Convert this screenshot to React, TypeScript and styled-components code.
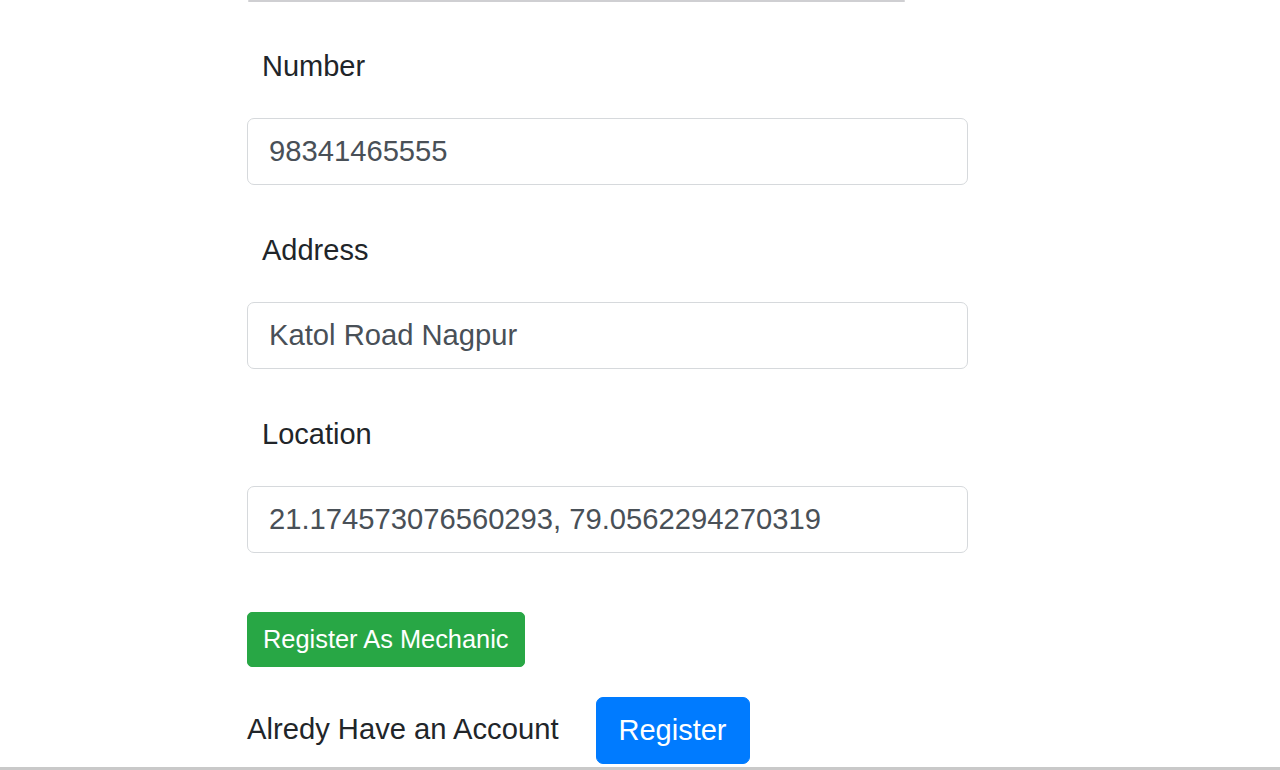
import React, { useState } from 'react';
import styled, { createGlobalStyle } from 'styled-components';

const GlobalStyle = createGlobalStyle`
  html, body {
    margin: 0;
    padding: 0;
    background: #fff;
  }
  body {
    font-family: "Liberation Sans", Arial, sans-serif;
    color: #212529;
  }
`;

const Page = styled.div`
  height: 770px;
  display: flex;
  flex-direction: column;
  overflow: hidden;
`;

const Content = styled.div`
  flex: 1;
  padding-left: 247px;
`;

const TopRule = styled.div`
  width: 657px;
  height: 2px;
  margin-left: 1px;
  background: #cfcfd2;
  border-radius: 1px;
`;

const Form = styled.form`
  width: 721px;
  display: flex;
  flex-direction: column;
  gap: 43px;
  padding-top: 42px;
`;

const Field = styled.div`
  display: flex;
  flex-direction: column;
  gap: 30px;
`;

const Label = styled.label`
  display: block;
  height: 44px;
  line-height: 44px;
  padding-left: 15px;
  font-size: 29px;
  color: #212529;
`;

const Input = styled.input`
  box-sizing: border-box;
  height: 67px;
  width: 100%;
  padding: 0 21px;
  border: 1px solid #d6d9dc;
  border-radius: 7px;
  font-family: "Liberation Sans", Arial, sans-serif;
  font-size: 29.2px;
  color: #495057;
  background: #fff;
  outline: none;
`;

const Actions = styled.div`
  display: flex;
  flex-direction: column;
  align-items: flex-start;
  gap: 30px;
  margin-top: 16px;
`;

const Button = styled.button<{ $variant: 'success' | 'primary'; $size: 'sm' | 'lg' }>`
  box-sizing: border-box;
  border: 1px solid ${(p) => (p.$variant === 'success' ? '#28a745' : '#007bff')};
  background: ${(p) => (p.$variant === 'success' ? '#28a745' : '#007bff')};
  color: #fff;
  font-family: "Liberation Sans", Arial, sans-serif;
  font-size: ${(p) => (p.$size === 'sm' ? '25.4px' : '29px')};
  height: ${(p) => (p.$size === 'sm' ? '55px' : '67px')};
  padding: ${(p) => (p.$size === 'sm' ? '0 15px' : '0 22px')};
  border-radius: ${(p) => (p.$size === 'sm' ? '5px' : '7px')};
  cursor: pointer;
`;

const LoginRow = styled.div`
  display: flex;
  align-items: center;
  gap: 37px;
`;

const LoginText = styled.span`
  font-size: 29.2px;
  color: #212529;
  margin-top: -3px;
`;

const BottomBar = styled.div`
  height: 3px;
  background: #c9c9c9;
  flex-shrink: 0;
`;

const App: React.FC = () => {
  const [number, setNumber] = useState('98341465555');
  const [address, setAddress] = useState('Katol Road Nagpur');
  const [location, setLocation] = useState('21.174573076560293, 79.0562294270319');

  return (
    <Page>
      <GlobalStyle />
      <Content>
        <TopRule />
        <Form onSubmit={(e) => e.preventDefault()}>
          <Field>
            <Label>Number</Label>
            <Input value={number} onChange={(e) => setNumber(e.target.value)} />
          </Field>
          <Field>
            <Label>Address</Label>
            <Input value={address} onChange={(e) => setAddress(e.target.value)} />
          </Field>
          <Field>
            <Label>Location</Label>
            <Input value={location} onChange={(e) => setLocation(e.target.value)} />
          </Field>
          <Actions>
            <Button type="submit" $variant="success" $size="sm">
              Register As Mechanic
            </Button>
            <LoginRow>
              <LoginText>Alredy Have an Account</LoginText>
              <Button type="button" $variant="primary" $size="lg">
                Register
              </Button>
            </LoginRow>
          </Actions>
        </Form>
      </Content>
      <BottomBar />
    </Page>
  );
};

export default App;
